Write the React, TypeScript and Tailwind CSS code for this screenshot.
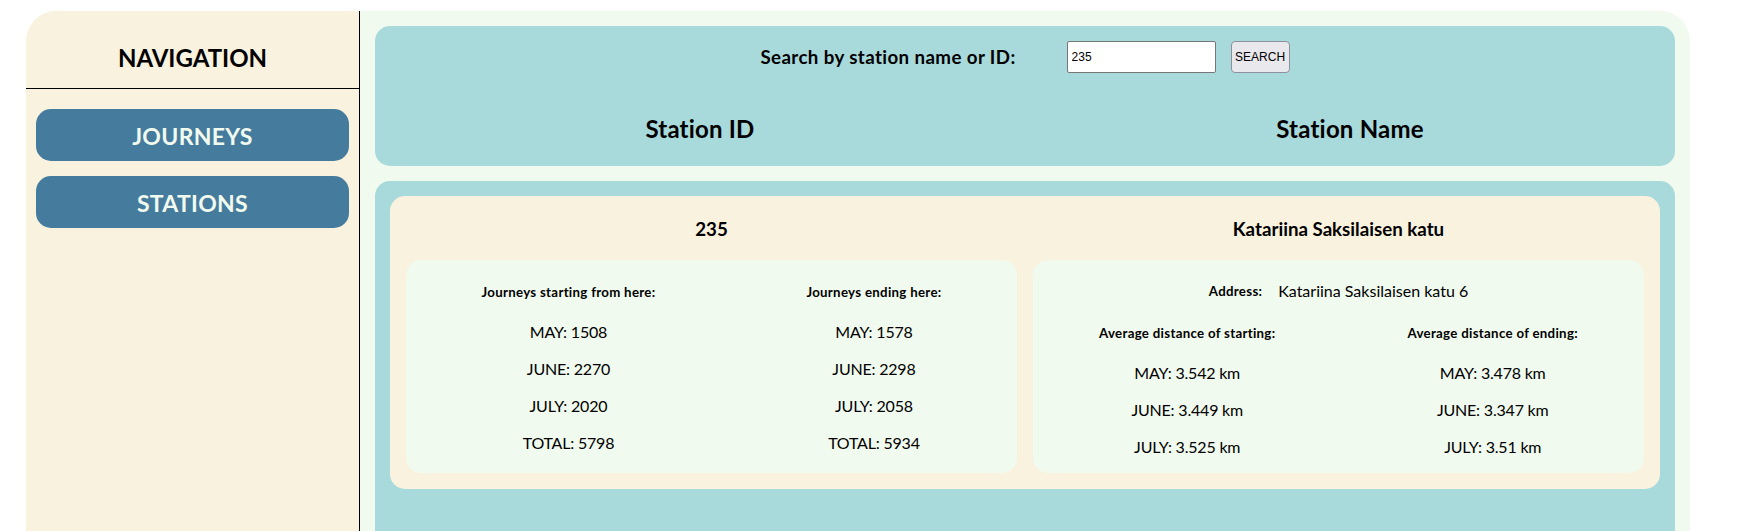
const startingCounts = ["MAY: 1508", "JUNE: 2270", "JULY: 2020", "TOTAL: 5798"];
const endingCounts = ["MAY: 1578", "JUNE: 2298", "JULY: 2058", "TOTAL: 5934"];
const startingDistances = ["MAY: 3.542 km", "JUNE: 3.449 km", "JULY: 3.525 km"];
const endingDistances = ["MAY: 3.478 km", "JUNE: 3.347 km", "JULY: 3.51 km"];

const StatColumn = ({ title, rows, gapTop }: { title: string; rows: string[]; gapTop: string }) => (
  <div className="flex flex-col items-center text-center">
    <h5 className="text-[13.28px] font-bold leading-[18px] tracking-[0.3px]">{title}</h5>
    <div className={`flex flex-col gap-[16px] text-[16px] leading-[21px] tracking-[-0.2px] ${gapTop}`}>
      {rows.map((row) => (
        <p key={row}>{row}</p>
      ))}
    </div>
  </div>
);

export default function App() {
  return (
    <div className="h-[531px] w-full overflow-hidden bg-white font-['Lato',sans-serif] text-black">
      <div className="ml-[26px] mt-[11px] flex h-[560px] w-[1664px] overflow-hidden rounded-t-[30px]">
        {/* Sidebar */}
        <aside className="w-[334px] shrink-0 border-r border-black bg-[#f9f2de]">
          <h2 className="border-b border-black pt-[31px] pb-[14px] text-center text-[24px] font-bold leading-[32px]">
            NAVIGATION
          </h2>
          <nav className="flex flex-col gap-[15px] px-[10px] pt-[20px]">
            <button className="h-[52px] rounded-[15px] bg-[#457b9d] pt-[2px] text-[23px] font-bold tracking-[0.3px] text-[#f1faee]">
              JOURNEYS
            </button>
            <button className="h-[52px] rounded-[15px] bg-[#457b9d] pt-[2px] text-[23px] font-bold tracking-[0.3px] text-[#f1faee]">
              STATIONS
            </button>
          </nav>
        </aside>

        {/* Main */}
        <main className="flex flex-1 flex-col gap-[15px] bg-[#f1faee] px-[15px] pt-[15px]">
          <section className="h-[140px] shrink-0 rounded-[15px] bg-[#a8dadc] pt-[15px]">
            <div className="flex h-[32px] items-center justify-center">
              <label className="mr-[51px] text-[18.72px] font-bold leading-[25px] tracking-[0.4px]">
                Search by station name or ID:
              </label>
              <input
                defaultValue="235"
                className="h-[32px] w-[149px] rounded-[2px] border border-[#767676] bg-white px-[4px] font-['Liberation_Sans',sans-serif] text-[12px] outline-none"
              />
              <button className="ml-[15px] h-[32px] w-[59px] rounded-[4px] border border-[#8f8f9d] bg-[#e9e9ed] font-['Liberation_Sans',sans-serif] text-[12px]">
                SEARCH
              </button>
            </div>
            <div className="mt-[40px] grid grid-cols-2 text-center text-[24px] font-bold leading-[32px] tracking-[0.2px]">
              <h2>Station ID</h2>
              <h2>Station Name</h2>
            </div>
          </section>

          <section className="flex-1 rounded-t-[15px] bg-[#a8dadc] p-[15px]">
            <div className="grid grid-cols-2 gap-x-[16px] gap-y-[18px] rounded-[15px] bg-[#f9f2de] px-[16px] pt-[21px] pb-[16px]">
              <h3 className="text-center text-[18.72px] font-bold leading-[25px]">235</h3>
              <h3 className="text-center text-[18.72px] font-bold leading-[25px]">Katariina Saksilaisen katu</h3>

              <div className="flex justify-around rounded-[15px] bg-[#f1faee] pt-[23px] pb-[19px]">
                <StatColumn title="Journeys starting from here:" rows={startingCounts} gapTop="mt-[20px]" />
                <StatColumn title="Journeys ending here:" rows={endingCounts} gapTop="mt-[20px]" />
              </div>

              <div className="rounded-[15px] bg-[#f1faee] pt-[22px] pb-[16px]">
                <div className="flex h-[18px] items-center justify-center gap-[16px]">
                  <h5 className="text-[13.28px] font-bold leading-[18px] tracking-[0.3px]">Address:</h5>
                  <p className="text-[16px] leading-[18px]">Katariina Saksilaisen katu 6</p>
                </div>
                <div className="mt-[24px] flex justify-around">
                  <StatColumn title="Average distance of starting:" rows={startingDistances} gapTop="mt-[20px]" />
                  <StatColumn title="Average distance of ending:" rows={endingDistances} gapTop="mt-[20px]" />
                </div>
              </div>
            </div>
          </section>
        </main>
      </div>
    </div>
  );
}
